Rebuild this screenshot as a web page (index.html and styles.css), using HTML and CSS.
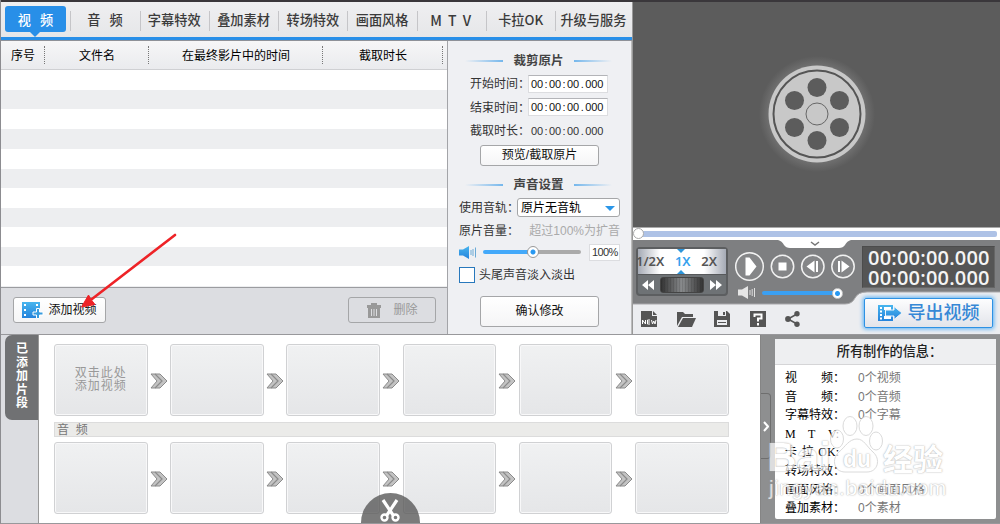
FILE: index.html
```html
<!DOCTYPE html>
<html lang="zh-CN">
<head>
  <meta charset="UTF-8">
  <title>视频编辑</title>
  <link rel="stylesheet" href="styles.css">
</head>
<body>
  <svg class="defs" width="0" height="0">
    <defs>
      <linearGradient id="blue" x1="0" y1="0" x2="0" y2="1">
        <stop offset="0" stop-color="#48b5ee"/>
        <stop offset="1" stop-color="#2583dc"/>
      </linearGradient>
      <symbol id="next" viewBox="0 0 18 16">
        <path d="M1 1h9l7 7-7 7H1l6-7z" fill="#c3c3c3" stroke="#8b8b8b"/>
        <path d="M5 1l7 7-7 7" fill="none" stroke="#8b8b8b" stroke-width="1.2"/>
      </symbol>
    </defs>
  </svg>

  <div class="app">
    <div class="top">
      <div class="editor">
        <nav class="tabs">
          <a class="tab active"><span>视&nbsp;&nbsp; 频</span></a>
          <a class="tab wide">音&nbsp;&nbsp; 频</a>
          <a class="tab">字幕特效</a>
          <a class="tab">叠加素材</a>
          <a class="tab">转场特效</a>
          <a class="tab">画面风格</a>
          <a class="tab latin">M T V</a>
          <a class="tab">卡拉OK</a>
          <a class="tab">升级与服务</a>
        </nav>

        <div class="work">
          <div class="list">
            <div class="list-head">
              <span class="c1">序号</span>
              <span class="c2">文件名</span>
              <span class="c3">在最终影片中的时间</span>
              <span class="c4">截取时长</span>
            </div>
            <div class="list-body"></div>
            <div class="list-tools">
              <button class="btn add">
                <svg width="22" height="17" viewBox="0 0 22 17">
                  <path d="M0 0h18v16H0z" fill="url(#blue)"/>
                  <path d="M2 2h2v2H2zM2 7h2v2H2zM2 12h2v2H2zM14 2h2v2h-2z" fill="#fff"/>
                  <path d="M14.500 6.500h3v3.500h3.500v3h-3.500v3.500h-3v-3.500H11v-3h3.500z" fill="#389cdf" stroke="#fff"/>
                </svg>
                添加视频
              </button>
              <button class="btn remove">
                <svg width="16" height="17" viewBox="0 0 16 17">
                  <path d="M1 3h4V1h6v2h4v3H1zM2 6h12v10H2z" fill="#999"/>
                  <path d="M5.500 7v7M8 7v7M10.500 7v7" stroke="#dcdde0" fill="none"/>
                </svg>
                删除
              </button>
            </div>
          </div>

          <div class="settings">
            <h3><span>裁剪原片</span></h3>
            <div class="row time"><label>开始时间：</label><span class="field">00<b>:</b>00<b>:</b>00<b>.</b>000</span></div>
            <div class="row time"><label>结束时间：</label><span class="field">00<b>:</b>00<b>:</b>00<b>.</b>000</span></div>
            <div class="row time"><label>截取时长：</label><span class="field plain">00<b>:</b>00<b>:</b>00<b>.</b>000</span></div>
            <button class="btn preview">预览/截取原片</button>
            <h3 class="second"><span>声音设置</span></h3>
            <div class="row track"><label>使用音轨：</label><span class="select">原片无音轨<i></i></span></div>
            <div class="row volume"><label>原片音量：</label><em>超过100%为扩音</em></div>
            <div class="row level">
              <svg width="18" height="13" viewBox="0 0 18 13">
                <path d="M0 3.500h4L10 0v13L4 9.500H0z" fill="url(#blue)"/>
                <path d="M12 4v5M14 3v7M16.500 1.500v10" stroke="#6aaad6" fill="none"/>
              </svg>
              <span class="slider"><i></i></span>
              <span class="percent">100%</span>
            </div>
            <div class="row fade"><i class="check"></i>头尾声音淡入淡出</div>
            <button class="btn confirm">确认修改</button>
          </div>
        </div>
      </div>

      <div class="player">
        <div class="screen">
          <svg class="reel" width="116" height="116" viewBox="-58 -58 116 116">
            <circle r="48.500" fill="#c8c8c8"/>
            <circle r="43.500" fill="none" stroke="#555" stroke-width="2"/>
            <circle r="11" fill="none" stroke="#666"/>
            <g fill="#5c5c5c">
              <circle cy="-26.500" r="9.500"/>
              <circle cx="22.500" cy="-13.500" r="9.500"/>
              <circle cx="22.500" cy="13.500" r="9.500"/>
              <circle cy="26.500" r="9.500"/>
              <circle cx="-22.500" cy="13.500" r="9.500"/>
              <circle cx="-22.500" cy="-13.500" r="9.500"/>
            </g>
          </svg>
        </div>
        <div class="seek"><i></i><b></b></div>
        <div class="deck">
          <svg class="deck-bg" width="367" height="94" viewBox="0 0 367 94">
            <path d="M0 0h367v94H0z" fill="#ecedf0"/>
            <path d="M0 0h367v52H234q-9 0-12 6q-3 6-10 6H0z" fill="#7e7f81"/>
            <path d="M145 0q4 1 6 5q2 3 6 3h49q4 0 6-3q2-4 6-5z" fill="#fff"/>
            <path d="M0 64h212q7 0 10-6q3-6 12-6h133" fill="none" stroke="#a8a8aa"/>
            <path d="M178 2l4 3 4-3" fill="none" stroke="#777" stroke-width="1.500"/>
          </svg>
          <div class="deck-main">
            <div class="speed">
              <div class="speed-top"><span>1/2X</span><b>1X</b><span>2X</span></div>
              <div class="speed-bottom">
                <svg width="12" height="10" viewBox="0 0 12 10"><path d="M6 0v10L0 5zM12 0v10L6 5z" fill="#fff"/></svg>
                <i></i>
                <svg width="12" height="10" viewBox="0 0 12 10"><path d="M0 0v10l6-5zM6 0v10l6-5z" fill="#fff"/></svg>
              </div>
            </div>
            <div class="controls">
              <svg width="122" height="32" viewBox="0 0 122 32">
                <g fill="#858688" stroke="#f1f1f1" stroke-width="1.500">
                  <circle cx="14.500" cy="15.500" r="13.800"/>
                  <circle cx="47.500" cy="15.500" r="11.200"/>
                  <circle cx="77.800" cy="15.500" r="11.200"/>
                  <circle cx="108" cy="15.500" r="11.200"/>
                </g>
                <path d="M10.500 6.500h4l7 9-7 9h-4zM43.500 11.500h8v8h-8zM71.500 15.500l8-6v12zM81 10h2v11h-2zM114.500 15.500l-8-6v12zM103 10h2v11h-2z" fill="#fff"/>
              </svg>
              <div class="sound">
                <svg width="18" height="13" viewBox="0 0 18 13">
                  <path d="M0 3.500h4L10 0v13L4 9.500H0z" fill="#e6e6e6"/>
                  <path d="M12 4v5M14.200 3v7M16.500 2v9" stroke="#e0e0e0" fill="none"/>
                </svg>
                <span class="sound-bar"><i></i></span>
              </div>
            </div>
            <div class="clock"><div>00:00:00.000</div><div>00:00:00.000</div></div>
          </div>
          <div class="deck-foot">
            <div class="files">
              <svg width="17" height="17" viewBox="0 0 17 17">
                <path d="M0 0h11v5h5v11H0z" fill="#555"/><path d="M12 0l4 4h-4z" fill="#555"/>
                <path d="M1.500 13V9l3 4V9M9 9H6.500v4H9M6.500 11H9M10.500 9l1 4 1.300-3 1.200 3 1-4" fill="none" stroke="#fff"/>
              </svg>
              <svg width="19" height="17" viewBox="0 0 19 17">
                <path d="M0 15V1h6l2 2h8v3H5z" fill="#555"/><path d="M6 7h13l-4 9H1z" fill="#555"/>
              </svg>
              <svg width="17" height="17" viewBox="0 0 17 17">
                <path d="M0 0h13l3 3v13H0z" fill="#555"/><path d="M4 0h8v5H4zM3 9h10v5H3z" fill="#ecedf0"/><path d="M9 1h2v3H9zM4 11h8v1H4z" fill="#555"/>
              </svg>
              <svg width="17" height="17" viewBox="0 0 17 17">
                <path d="M0 0h16v16H0z" fill="#555"/><path d="M4.500 6V3.500h7v4H8v3M8 12v2.500" fill="none" stroke="#fff" stroke-width="2"/>
              </svg>
              <svg width="15" height="16" viewBox="0 0 15 16">
                <path d="M12 3L3 8l9 5" fill="none" stroke="#555" stroke-width="1.500"/>
                <circle cx="12" cy="2.700" r="2.700" fill="#555"/><circle cx="3" cy="8" r="2.900" fill="#555"/><circle cx="12" cy="13.200" r="2.700" fill="#555"/>
              </svg>
            </div>
            <button class="export">
              <svg width="25" height="17" viewBox="0 0 25 17">
                <path d="M0 0h15v16H0z" fill="url(#blue)"/>
                <path d="M2 2h2v2H2zM2 5.500h2v2H2zM2 9h2v2H2zM2 12.500h2v2H2zM6 2h7v3H6zM6 11h7v3H6z" fill="#fff"/>
                <path d="M7.500 5H16V1.500L24 8l-8 6.500V11H7.500z" fill="url(#blue)" stroke="#eef3fa"/>
              </svg>
              <span>导出视频</span>
            </button>
          </div>
        </div>
      </div>
    </div>

    <div class="bottom">
      <div class="side"><div class="side-tab">已添加片段</div></div>
      <div class="clips">
        <div class="strip">
          <div class="slot">双击此处<br>添加视频</div><svg><use href="#next"/></svg>
          <div class="slot"></div><svg><use href="#next"/></svg>
          <div class="slot"></div><svg><use href="#next"/></svg>
          <div class="slot"></div><svg><use href="#next"/></svg>
          <div class="slot"></div><svg><use href="#next"/></svg>
          <div class="slot"></div>
        </div>
        <div class="audio-title">音&nbsp; 频</div>
        <div class="strip">
          <div class="slot"></div><svg><use href="#next"/></svg>
          <div class="slot"></div><svg><use href="#next"/></svg>
          <div class="slot"></div><svg><use href="#next"/></svg>
          <div class="slot"></div><svg><use href="#next"/></svg>
          <div class="slot"></div><svg><use href="#next"/></svg>
          <div class="slot"></div>
        </div>
      </div>
      <div class="info">
        <div class="handle">
          <svg width="6" height="11" viewBox="0 0 6 11"><path d="M1 1l4 4.500L1 10" fill="none" stroke="#fff" stroke-width="2"/></svg>
        </div>
        <div class="card">
          <h4>所有制作的信息：</h4>
          <dl>
            <dt><span>视</span><span>频：</span></dt><dd>0个视频</dd>
            <dt><span>音</span><span>频：</span></dt><dd>0个音频</dd>
            <dt>字幕特效：</dt><dd>0个字幕</dd>
            <dt class="mono"><span>M</span><span>T</span><span>V:</span></dt><dd></dd>
            <dt class="mono"><span>卡</span><span>拉</span><span>OK:</span></dt><dd></dd>
            <dt>转场特效：</dt><dd></dd>
            <dt>画面风格：</dt><dd>0个画面风格</dd>
            <dt>叠加素材：</dt><dd>0个素材</dd>
          </dl>
        </div>
      </div>
    </div>

    <div class="cut">
      <svg width="22" height="24" viewBox="0 0 22 24">
        <path d="M4 1l10 15M18 1L8 16" stroke="#fff" stroke-width="3.200" fill="none"/>
        <circle cx="5.500" cy="18.500" r="3" fill="none" stroke="#fff" stroke-width="2.400"/>
        <circle cx="16.500" cy="18.500" r="3" fill="none" stroke="#fff" stroke-width="2.400"/>
      </svg>
    </div>

    <svg class="pointer" width="100" height="80" viewBox="0 0 100 80">
      <path d="M95 5L12 69" stroke="#ee2327" stroke-width="2.600" stroke-linecap="round"/>
      <path d="M1.500 77L8.500 65l2.500 4.500 4 5z" fill="#ee2327" stroke="#ee2327"/>
    </svg>

    <div class="mark">
      <span class="mark-bai">Bai</span>
      <svg class="paw" width="56" height="60" viewBox="0 0 56 60">
        <g fill="#fff" stroke="#ccc">
          <ellipse cx="8" cy="24" rx="6.500" ry="9"/>
          <ellipse cx="21" cy="11" rx="7" ry="9.500"/>
          <ellipse cx="37" cy="11" rx="7" ry="9.500"/>
          <ellipse cx="47" cy="26" rx="6.500" ry="9"/>
          <path d="M28 24c7 0 10 8 16 13c8 7 5 20-6 20h-22c-11 0-14-13-6-20c6-5 10-13 18-13z"/>
        </g>
      </svg>
      <span class="mark-du">du</span>
      <span class="mark-cn">经验</span>
      <span class="mark-url">jingyan.baidu.com</span>
    </div>
  </div>
</body>
</html>
```
FILE: styles.css
```css
* {
  margin: 0;
  padding: 0;
  box-sizing: border-box;
}

body {
  width: 1000px;
  height: 524px;
  overflow: hidden;
  font: 12px/16px "Liberation Sans", "Noto Sans CJK SC", sans-serif;
  color: #222;
  background: #dcdde1;
}

button {
  font: inherit;
  color: #111;
}

i, em {
  font-style: normal;
}

svg {
  flex: none;
}

.defs {
  position: absolute;
}

.app {
  position: relative;
  height: 524px;
  overflow: hidden;
  border-left: 1px solid #8c8c90;
  border-bottom: 1px solid #98989b;
}

.top {
  display: flex;
  height: 335px;
  border-top: 2px solid #3a373b;
  border-bottom: 1px solid #98989b;
}

.editor {
  width: 631px;
}

/* tabs */
.tabs {
  display: flex;
  height: 39px;
  background: linear-gradient(#efeff1, #e5e6e8);
  border-bottom: 1px solid #8e9198;
  box-shadow: inset 0 -3px #288fe8;
}

.tab {
  position: relative;
  width: 69.300px;
  height: 35px;
  padding-top: 8px;
  text-align: center;
  font-family: "Noto Sans CJK SC", sans-serif;
  font-size: 13.200px;
  line-height: 20px;
  font-weight: 500;
  color: #3b3b3b;
  white-space: nowrap;
}

.tab + .tab::before {
  content: "";
  position: absolute;
  left: 0;
  top: 9px;
  width: 1px;
  height: 20px;
  background: #c5c5c8;
}

.tab:last-child {
  width: 76px;
}

.tab.latin {
  font-size: 14px;
  letter-spacing: 1.500px;
}

.tab.active {
  padding: 4px 4px 0;
  color: #fff;
}

.tab.active span {
  display: block;
  width: 61px;
  height: 26px;
  line-height: 28px;
  border-radius: 3px;
  background: #288fe8;
}

.tab.active::after {
  content: "";
  position: absolute;
  left: 29px;
  top: 30px;
  border: 5px solid transparent;
  border-top: 5px solid #288fe8;
}

.work {
  display: flex;
  height: 293px;
}

/* file list */
.list {
  display: flex;
  flex-direction: column;
  width: 447px;
  border-right: 1px solid #a3a4a8;
}

.list-head {
  display: flex;
  height: 29px;
  line-height: 31px;
  color: #000;
  text-align: center;
  background: linear-gradient(#f6f6f7, #eaebee);
  border-bottom: 1px solid #cfd0d3;
}

.list-head span {
  position: relative;
}

.list-head span::after {
  content: "";
  position: absolute;
  right: 0;
  top: 5px;
  height: 18px;
  border-right: 1px dotted #777;
}

.c1 { width: 44px; }
.c2 { width: 104px; }
.c3 { width: 174px; }
.c4 { width: 120px; }

.list-body {
  flex: 1;
  background: repeating-linear-gradient(#fff 0 20px, #edeef0 20px 39.300px);
}

.list-tools {
  display: flex;
  justify-content: space-between;
  height: 47px;
  padding: 9px 11px 0 12px;
  background: #dcdde1;
  border-top: 1px solid #9b9ca0;
}

.btn {
  display: flex;
  align-items: center;
  justify-content: center;
  border: 1px solid #a5a6a8;
  border-radius: 3px;
  background: linear-gradient(#fff, #f5f5f6);
  white-space: nowrap;
}

.btn.add {
  width: 93px;
  height: 26px;
  gap: 4px;
}

.btn.remove {
  width: 88px;
  height: 26px;
  gap: 11px;
  color: #999;
  background: #dcdde1;
}

/* clip settings */
.settings {
  width: 184px;
  padding: 12px 11px 0 11px;
  background: #eff0f3;
  border-right: 1px solid #bbb;
}

.settings h3 {
  display: flex;
  align-items: center;
  justify-content: center;
  gap: 10px;
  height: 16px;
  margin: 0 6px 0 4px;
  font-size: 12.500px;
  color: #444;
}

.settings h3::before,
.settings h3::after {
  content: "";
  width: 38px;
  height: 2px;
  background: linear-gradient(to right, transparent, #75b7ec);
}

.settings h3::after {
  background: linear-gradient(to left, transparent, #75b7ec);
}

.row {
  display: flex;
  align-items: center;
  color: #333;
  white-space: nowrap;
}

.row label {
  padding-top: 1px;
}

.time {
  height: 23.500px;
  padding-left: 11px;
}

.settings h3 + .time {
  margin-top: 3px;
}

.time label {
  width: 58px;
}

.field {
  width: 80px;
  height: 18px;
  padding-left: 2px;
  font: 11px/16px "Liberation Sans", sans-serif;
  letter-spacing: -.1px;
  color: #111;
  background: #fff;
  border: 1px solid #dcdde0;
  border-top-color: #b3b4b8;
}

.field b {
  display: inline-block;
  width: 6px;
  font-weight: 400;
  text-align: center;
}

.field.plain {
  background: none;
  border-color: transparent;
  color: #333;
}

.btn.preview {
  width: 119px;
  height: 21px;
  margin: 2px 0 0 21px;
}

.settings h3.second {
  margin-top: 11px;
}

.track {
  height: 22px;
  margin-top: 4px;
}

.track label {
  width: 58px;
}

.select {
  display: flex;
  align-items: center;
  justify-content: space-between;
  width: 103px;
  height: 19px;
  padding: 1px 4px 0 3px;
  border: 1px solid #a5a6a8;
  border-radius: 3px;
  background: #fff;
  color: #000;
}

.select i {
  border: 5px solid transparent;
  border-top-color: #2b96e8;
  border-bottom: 0;
}

.volume {
  justify-content: space-between;
  height: 24px;
}

.volume em {
  padding-top: 1px;
  color: #aaa;
}

.level {
  height: 19px;
}

.slider {
  width: 98px;
  height: 4px;
  margin-left: 6px;
  border-radius: 2px;
  background: linear-gradient(to right, #43a9fa 50%, #aaa 50%);
}

.slider i {
  display: block;
  width: 12px;
  height: 12px;
  margin: -4px 0 0 44px;
  border: 1px solid #999;
  border-radius: 50%;
  background: radial-gradient(circle, #2898f1 2px, #fff 3px);
}

.percent {
  width: 31px;
  height: 17px;
  margin-left: 8px;
  padding-left: 2px;
  font: 11px/15px "Liberation Sans", sans-serif;
  letter-spacing: -.6px;
  background: #fff;
  border: 1px solid #dcdde0;
}

.fade {
  height: 22px;
  margin-top: 2px;
  gap: 4px;
}

.check {
  width: 16px;
  height: 16px;
  border: 1px solid #2878bc;
  background: #fff;
}

.btn.confirm {
  width: 119px;
  height: 31px;
  margin: 10px 0 0 21px;
}

/* player */
.player {
  flex: 1;
  background: #ecedf0;
  border-left: 1px solid #999;
}

.screen {
  display: flex;
  align-items: center;
  justify-content: center;
  height: 226px;
  padding-bottom: 1px;
  background: #5c5c5c;
  border-bottom: 1px solid #aaa;
}

.reel {
  border-radius: 50%;
  background: radial-gradient(circle, #747474 46px, #5c5c5c 58px);
}

.seek {
  position: relative;
  height: 12px;
  padding: 3px 3px 0 1px;
  background: #fff;
}

.seek i {
  display: block;
  height: 6px;
  border-radius: 2px;
  background: #aec2e6;
}

.seek b {
  position: absolute;
  left: 0;
  top: 0;
  width: 11px;
  height: 11px;
  border: 1px solid #aaa;
  border-radius: 50%;
  background: #fff;
}

.deck {
  position: relative;
  height: 94px;
}

.deck-bg {
  position: absolute;
  left: 0;
  top: 0;
}

.deck-main {
  position: relative;
  display: flex;
  height: 52px;
  padding-top: 6px;
}

.speed {
  width: 92px;
  height: 49px;
  margin: 1px 0 0 3px;
  border: 2px solid #5c5e60;
  border-radius: 4px;
  background: #6e7275;
}

.speed-top {
  position: relative;
  display: flex;
  justify-content: space-between;
  height: 25px;
  padding-right: 9px;
  line-height: 25px;
  font-family: "Noto Sans", sans-serif;
  font-size: 13px;
  font-weight: 600;
  color: #555;
  background: linear-gradient(to right, #a5aab5, #fff 25%, #fff 75%, #a5aab5);
}

.speed-top span:first-child {
  margin-left: -2px;
}

.speed-top b {
  font-weight: 600;
  color: #36a1ed;
}

.speed-top::before,
.speed-top::after {
  content: "";
  position: absolute;
  left: 39px;
  top: 0;
  border: 4px solid transparent;
  border-top-color: #2d95da;
  border-bottom: 0;
}

.speed-top::after {
  top: auto;
  bottom: 0;
  border: 4px solid transparent;
  border-bottom-color: #2d95da;
  border-top: 0;
}

.speed-bottom {
  display: flex;
  align-items: center;
  justify-content: space-between;
  height: 20px;
  padding: 0 4px;
  border-top: 1px solid #57595b;
}

.speed-bottom i {
  width: 44px;
  height: 16px;
  border: 1px solid #444;
  border-radius: 3px;
  background: repeating-linear-gradient(to right, rgba(30, 30, 30, .15) 0 1px, transparent 1px 3px), linear-gradient(to right, #333, #898b8d, #333);
}

.controls {
  width: 122px;
  margin: 5px 0 0 7px;
}

.controls > svg {
  display: block;
}

.sound {
  display: flex;
  align-items: center;
  margin: 3px 0 0 3px;
}

.sound-bar {
  width: 80px;
  height: 4px;
  margin-left: 6px;
  border-radius: 2px;
  background: #3ba0f2;
}

.sound-bar i {
  display: block;
  width: 11px;
  height: 11px;
  margin: -3px 0 0 70px;
  border: 1px solid #ccc;
  border-radius: 50%;
  background: radial-gradient(circle, #2898f1 2px, #fff 3px);
}

.clock {
  width: 133px;
  height: 42px;
  margin-left: 5px;
  padding: 1px 0 0 5px;
  font: 600 20px/19.500px "Open Sans", sans-serif;
  letter-spacing: .2px;
  color: #f4f4f4;
  background: #555;
  border: 1px solid #4c4c4c;
  border-right-color: #666;
  border-bottom-color: #666;
}

.deck-foot {
  position: relative;
  display: flex;
}

.files {
  display: flex;
  width: 229px;
  gap: 18.500px;
  padding: 19px 0 0 8px;
}

.export {
  display: flex;
  align-items: center;
  justify-content: center;
  gap: 5px;
  width: 129px;
  height: 30px;
  margin: 6px 0 0 2px;
  border: 1px solid #2d91e4;
  border-radius: 2px;
  background: linear-gradient(#fdfdfe, #e2e4ea);
  box-shadow: 0 0 4px 1px #57b0f5;
  font-size: 18px;
  line-height: 28px;
  font-weight: 500;
  color: #3688d6;
}

/* clips */
.bottom {
  display: flex;
  height: 188px;
}

.side {
  width: 37px;
  padding-left: 4px;
}

.side-tab {
  width: 33px;
  height: 85px;
  padding: 8px 10px 0 11px;
  border-radius: 7px 0 0 7px;
  background: #707173;
  color: #fff;
  font-weight: 700;
  line-height: 13.500px;
}

.clips {
  width: 722px;
  padding: 9px 0 0 15px;
  background: #fff;
  border-left: 1px solid #999;
}

.strip {
  display: flex;
  align-items: center;
}

.strip svg {
  width: 18px;
  height: 16px;
  margin: 2px 2.300px 0 2.300px;
}

.slot {
  display: flex;
  align-items: center;
  justify-content: center;
  width: 93.600px;
  height: 72px;
  border: 1px solid #d0d1d3;
  border-radius: 3px;
  box-shadow: inset 0 0 0 1px #f8f8f9;
  background: linear-gradient(#f0f1f2, #e5e6e8);
  color: #999;
  font-size: 12px;
  line-height: 13px;
  letter-spacing: 1px;
}

.audio-title {
  width: 675px;
  height: 15px;
  margin: 6px 0 5px;
  padding-left: 2px;
  line-height: 14px;
  color: #777;
  background: #ebebe9;
  border: 1px solid #dcdcdc;
}

/* project info */
.info {
  display: flex;
  flex: 1;
  padding: 4px 4px 4px 0;
  background: #8e8f90;
  border-left: 1px solid #858585;
}

.handle {
  display: flex;
  align-items: center;
  width: 10px;
  height: 66px;
  margin: 54px 4px 0 0;
  padding-left: 2px;
  border: 1px solid #6e6e6e;
  border-left: 0;
  border-radius: 0 4px 4px 0;
}

.card {
  flex: 1;
  height: 180px;
  border-radius: 2px;
  background: #fff;
}

.card h4 {
  height: 26px;
  line-height: 26px;
  padding-left: 8px;
  text-align: center;
  font-size: 13.200px;
  font-weight: 500;
  background: #eeeff1;
  border-bottom: 1px solid #d5d5d7;
}

.card dl {
  display: grid;
  grid-template-columns: 60px 1fr;
  grid-auto-rows: 18.600px;
  column-gap: 13px;
  padding: 4px 0 0 10px;
  line-height: 19px;
  color: #000;
  white-space: nowrap;
}

.card dt {
  display: flex;
  justify-content: space-between;
}

.card dt.mono {
  padding-right: 6px;
  font-family: "Liberation Serif", "Noto Sans CJK SC", serif;
}

.card dd {
  color: #777;
}

/* floating scissors button */
.cut {
  position: absolute;
  left: 360px;
  top: 493px;
  width: 59px;
  height: 30px;
  padding: 6px 0 0 18px;
  border-radius: 30px 30px 0 0;
  background: rgba(90, 90, 90, .8);
}

.pointer {
  position: absolute;
  left: 79px;
  top: 230px;
}

/* watermark */
.mark {
  position: absolute;
  left: 766px;
  top: 415px;
  width: 190px;
  height: 90px;
  opacity: .7;
  color: #fff;
  text-shadow: 0 0 1px #999, 0 0 2px #aaa;
}

.mark span,
.paw {
  position: absolute;
  white-space: nowrap;
}

.mark-bai {
  left: 0;
  top: 22px;
  font: 700 41px/40px "Liberation Sans", sans-serif;
}

.paw {
  left: 62px;
  top: 0;
}

.mark-du {
  left: 76px;
  top: 32px;
  font: 700 23px/24px "Liberation Sans", sans-serif;
}

.mark-cn {
  left: 116px;
  top: 23px;
  font: 700 30px/38px "Noto Sans CJK SC", sans-serif;
}

.mark-url {
  left: 2px;
  top: 61px;
  font: 21px/24px "Liberation Sans", sans-serif;
  letter-spacing: .5px;
}
```
